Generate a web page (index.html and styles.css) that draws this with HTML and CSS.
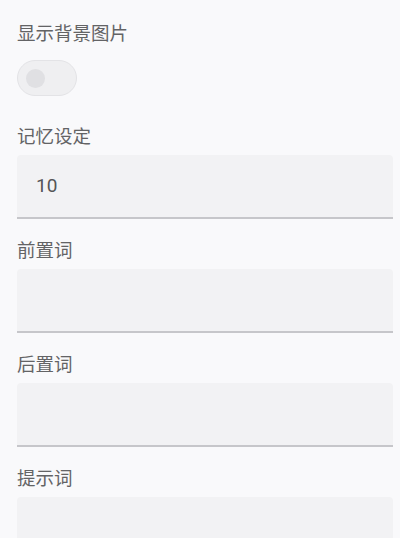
FILE: index.html
```html
<!DOCTYPE html>
<html lang="zh">
<head>
<meta charset="utf-8">
<link rel="stylesheet" href="styles.css">
</head>
<body>
<div class="page">
  <div class="field field-toggle">
    <div class="label">显示背景图片</div>
    <div class="toggle"><span class="knob"></span></div>
  </div>
  <div class="field">
    <div class="label">记忆设定</div>
    <div class="input"><span class="value">10</span></div>
  </div>
  <div class="field">
    <div class="label">前置词</div>
    <div class="input"></div>
  </div>
  <div class="field">
    <div class="label">后置词</div>
    <div class="input"></div>
  </div>
  <div class="field">
    <div class="label">提示词</div>
    <div class="input"></div>
  </div>
</div>
</body>
</html>
```
FILE: styles.css
```css
html, body {
  margin: 0;
  padding: 0;
  background: #f9f9fb;
  overflow: hidden;
}
body {
  font-family: "Noto Sans CJK SC", "Noto Sans", Roboto, sans-serif;
  color: #666668;
}
.page {
  display: flex;
  flex-direction: column;
  padding: 20px 7px 0 17px;
  gap: 18px;
}
.field {
  display: flex;
  flex-direction: column;
  gap: 8px;
}
.field-toggle {
  gap: 16px;
  margin-bottom: 9px;
}
.label {
  font-size: 18.5px;
  line-height: 24px;
  height: 24px;
  color: #636365;
}
.toggle {
  width: 60px;
  height: 36px;
  box-sizing: border-box;
  border: 1.5px solid #e3e3e6;
  border-radius: 18px;
  background: #efeff1;
  display: flex;
  align-items: center;
  padding-left: 7.5px;
}
.knob {
  width: 19px;
  height: 19px;
  border-radius: 50%;
  background: #e0e0e3;
}
.input {
  height: 64px;
  box-sizing: border-box;
  background: #f2f2f4;
  border-bottom: 2px solid #c6c6ca;
  border-radius: 4px 4px 0 0;
  display: flex;
  align-items: center;
  padding-left: 19px;
}
.value {
  font-family: Roboto, "Noto Sans", sans-serif;
  font-size: 19px;
  color: #555557;
  padding-bottom: 1px;
}
```
